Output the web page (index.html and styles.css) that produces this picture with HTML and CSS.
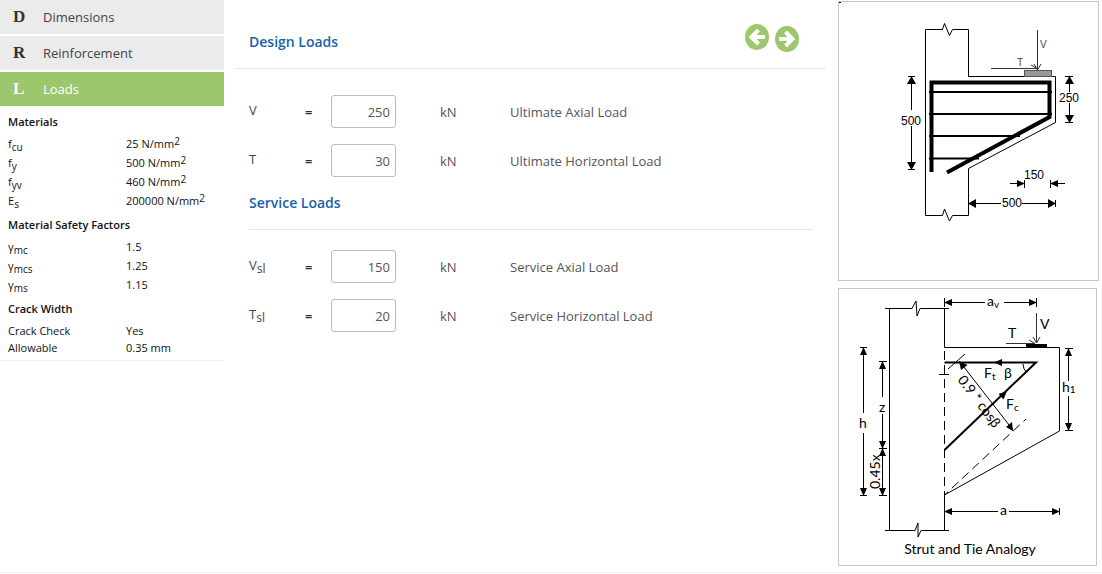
FILE: index.html
```html
<!DOCTYPE html>
<html lang="en">
<head>
    <meta charset="UTF-8">
    <meta name="viewport" content="width=device-width, initial-scale=1.0">
    <title>Corbel Design - Loads</title>
    <link rel="stylesheet" href="styles.css">
</head>
<body>
    <div class="page">
        <aside class="sidebar">
            <nav class="steps">
                <a href="#dimensions"><b>D</b><span>Dimensions</span></a>
                <a href="#reinforcement"><b>R</b><span>Reinforcement</span></a>
                <a href="#loads" class="active"><b>L</b><span>Loads</span></a>
            </nav>

            <h3>Materials</h3>
            <table class="summary">
                <tr><th>f<sub>cu</sub></th><td>25 N/mm<sup>2</sup></td></tr>
                <tr><th>f<sub>y</sub></th><td>500 N/mm<sup>2</sup></td></tr>
                <tr><th>f<sub>yv</sub></th><td>460 N/mm<sup>2</sup></td></tr>
                <tr><th>E<sub>s</sub></th><td>200000 N/mm<sup>2</sup></td></tr>
            </table>

            <h3>Material Safety Factors</h3>
            <table class="summary">
                <tr><th>γ<sub>mc</sub></th><td>1.5</td></tr>
                <tr><th>γ<sub>mcs</sub></th><td>1.25</td></tr>
                <tr><th>γ<sub>ms</sub></th><td>1.15</td></tr>
            </table>

            <h3>Crack Width</h3>
            <table class="summary compact">
                <tr><th>Crack Check</th><td>Yes</td></tr>
                <tr><th>Allowable</th><td>0.35 mm</td></tr>
            </table>
        </aside>

        <main class="content">
            <header class="title-bar">
                <h2>Design Loads</h2>
                <div class="pager">
                    <button type="button" class="prev" aria-label="Previous">
                        <svg viewBox="0 0 24 26"><ellipse cx="12" cy="13" rx="12" ry="13"/><path d="M20 13H7M13.500 6L6.500 13L13.500 20"/></svg>
                    </button>
                    <button type="button" class="next" aria-label="Next">
                        <svg viewBox="0 0 24 26"><ellipse cx="12" cy="13" rx="12" ry="13"/><path d="M4 13H17M10.500 6L17.500 13L10.500 20"/></svg>
                    </button>
                </div>
            </header>

            <form class="loads">
                <div class="row">
                    <label for="v">V</label><span class="equals">=</span>
                    <input type="text" id="v" value="250">
                    <span>kN</span><span>Ultimate Axial Load</span>
                </div>
                <div class="row">
                    <label for="t">T</label><span class="equals">=</span>
                    <input type="text" id="t" value="30">
                    <span>kN</span><span>Ultimate Horizontal Load</span>
                </div>

                <h2>Service Loads</h2>

                <div class="row">
                    <label for="vsl">V<sub>sl</sub></label><span class="equals">=</span>
                    <input type="text" id="vsl" value="150">
                    <span>kN</span><span>Service Axial Load</span>
                </div>
                <div class="row">
                    <label for="tsl">T<sub>sl</sub></label><span class="equals">=</span>
                    <input type="text" id="tsl" value="20">
                    <span>kN</span><span>Service Horizontal Load</span>
                </div>
            </form>
        </main>

        <div class="figures">
            <!-- Corbel elevation with reinforcement -->
            <svg class="figure elevation" viewBox="0 0 259 278">
                <rect width="2" height="1"/>
                <g class="line">
                    <path d="M86.500 213.500V27.500H103.500L105.500 21.500L110.500 33.500L113.500 27.500H129.500V74.500H216.500V120.500L129.500 166.500V213.500H113.500L110.500 219L105.500 207L103.500 213.500Z"/>
                    <path d="M72.500 76V108M72.500 124V165M69 74.500H76M69 167.500H76"/>
                    <path d="M230.500 76V90M230.500 101V118M226 74.500H234M226 120.500H234"/>
                    <path d="M171 181.500H183M185.500 178V186M211.500 178V186M214 181.500H226"/>
                    <path d="M132 201.500H162M183 201.500H214M129.500 198V205M216.500 198V205"/>
                </g>
                <g class="bar">
                    <path d="M92.500 170V80.500H210.500V115L108 170.500"/>
                    <path class="link" d="M90 90H213M90 112H213M90 134H181M90 156.500H140"/>
                </g>
                <g class="head">
                    <path d="M72.500 74L77 82H68ZM72.500 168L77 160H68Z"/>
                    <path d="M230.500 74L235 82H226ZM230.500 121L235 113H226Z"/>
                    <path d="M186 181.500L178 178V185ZM211 181.500L219 178V185Z"/>
                    <path d="M129 201.500L137 197V206ZM217 201.500L209 197V206Z"/>
                </g>
                <rect class="plate" x="185.500" y="68.500" width="27" height="6"/>
                <path class="load" d="M198.500 28V67M195 62L198.500 68L202 62M152 66.500H197M192 63L198 66.500"/>
                <text class="small" x="178" y="64">T</text>
                <text class="small" x="201" y="46">V</text>
                <text x="62" y="123">500</text>
                <text x="220" y="100">250</text>
                <text x="185" y="177">150</text>
                <text x="163" y="205">500</text>
            </svg>

            <!-- Strut and tie model -->
            <svg class="figure strut" viewBox="0 0 257 276">
                <g class="line">
                    <path d="M46 19.500H73L77 12L78 27L81 19.500H110M50.500 19.500V241.500M105.500 19.500V58.500H220.500V142L105.500 206V241.500"/>
                    <path d="M46 241.500H76L79 234L79 248L82 241.500H110"/>
                    <path d="M109 80L126 65M100 85.500H110M184 75Q184 80 188 84"/>
                    <path class="dashed" d="M105.500 62V206L187 130"/>
                    <path d="M105.500 9V18M197.500 9V18M108 13.500H146M165 13.500H195"/>
                    <path d="M24.500 60V124M24.500 144V204M21 58.500H28M21 206.500H28"/>
                    <path d="M43.500 75V108M43.500 125V204M40 72.500H48M40 159.500H48M40 206.500H48"/>
                    <path d="M229.500 61V92M229.500 107V139M226 59.500H234M226 141.500H234"/>
                    <path d="M220.500 219V226M108 222.500H159M170 222.500H218"/>
                    <path d="M121 73L174 141"/>
                </g>
                <path class="tie" d="M105.500 161L197 73.500H105.500"/>
                <path class="load" d="M197.500 24V53M194 48L197.500 54L201 48M167 54.500H196M190 51L196 54.500"/>
                <rect x="187" y="55" width="21" height="3"/>
                <g class="head">
                    <path d="M105 13.500L113 10V17ZM198 13.500L190 10V17Z"/>
                    <path d="M24.500 58L28 66H21ZM24.500 207L28 199H21Z"/>
                    <path d="M43.500 72L47 80H40ZM43.500 160L47 152H40ZM43.500 159L47 167H40ZM43.500 207L47 199H40Z"/>
                    <path d="M229.500 59L233 67H226ZM229.500 142L233 134H226Z"/>
                    <path d="M105 222.500L113 219V226ZM221 222.500L213 219V226Z"/>
                    <path d="M155 73.500L163 70V77ZM168 102L159.500 105L164.500 110.500Z"/>
                    <path d="M120 72L122 81L128.500 76ZM174 142L167 138L173 133Z"/>
                </g>
                <text x="148" y="17">a<tspan class="sub" dy="2">v</tspan></text>
                <text x="169" y="49">T</text>
                <text x="201" y="40">V</text>
                <text x="145" y="89">F<tspan class="sub" dy="2">t</tspan></text>
                <text x="165" y="89">β</text>
                <text x="167" y="120">F<tspan class="sub" dy="2">c</tspan></text>
                <text x="223" y="103">h<tspan class="sub" dy="1">1</tspan></text>
                <text x="20" y="139">h</text>
                <text x="40" y="123">z</text>
                <text x="161" y="226">a</text>
                <text transform="translate(41 200) rotate(-90)">0.45x</text>
                <text transform="translate(118 91) rotate(53)">0.9 * cosβ</text>
                <text class="caption" x="131" y="265">Strut and Tie Analogy</text>
            </svg>
        </div>
    </div>
</body>
</html>
```
FILE: styles.css
```css
* {
    box-sizing: border-box;
}

body {
    margin: 0;
    background-color: #fff;
    color: #444;
    font-family: "Open Sans", "Noto Sans", sans-serif;
    font-size: 13px;
}

.page {
    display: grid;
    grid-template-columns: 224px 1fr 264px;
    align-items: start;
    padding-bottom: 6px;
    border-bottom: 1px solid #eee;
}

/* Sidebar */
.sidebar {
    padding-bottom: 4px;
    border-bottom: 1px solid #eee;
    color: #111;
}

.steps {
    display: grid;
    gap: 2px;
    padding-bottom: 2px;
}

.steps a {
    display: flex;
    align-items: center;
    height: 34px;
    padding-left: 13px;
    background-color: #ebebeb;
    color: #444;
    text-decoration: none;
}

.steps b {
    width: 30px;
    color: #333;
    font-family: "Liberation Serif", serif;
    font-size: 17px;
}

.steps .active,
.steps .active b {
    background-color: #9cc76d;
    color: #fff;
}

.sidebar h3 {
    margin: 5px 8px 4px;
    color: #111;
    font-size: 11px;
    font-weight: 600;
    line-height: 18px;
}

.summary {
    width: 100%;
    border-collapse: collapse;
    font-size: 11px;
    line-height: 17px;
}

.summary tr {
    height: 19px;
}

.summary.compact tr {
    height: 17px;
}

.summary th,
.summary td {
    padding: 0;
    text-align: left;
    vertical-align: top;
    font-weight: 400;
}

.summary th {
    width: 126px;
    padding-left: 8px;
}

sub,
sup {
    font-size: 10px;
    line-height: 0;
}

sub {
    vertical-align: -3px;
}

sup {
    vertical-align: 3px;
}

/* Loads form */
.content h2 {
    margin: 0;
    color: #1763ab;
    font-size: 14px;
    font-weight: 600;
    line-height: 20px;
}

.title-bar {
    display: flex;
    justify-content: space-between;
    align-items: flex-start;
    height: 69px;
    margin: 0 12px 0 11px;
    padding: 24px 27px 0 14px;
    border-bottom: 1px solid #e4e4e4;
}

.title-bar h2 {
    padding-top: 8px;
}

.pager {
    display: flex;
    gap: 6px;
}

.pager button {
    width: 24px;
    height: 26px;
    padding: 0;
    border: none;
    background: none;
    cursor: pointer;
}

.pager .next {
    margin-top: 2px;
}

.pager svg {
    display: block;
    fill: #9cc76d;
}

.pager path {
    fill: none;
    stroke: #fff;
    stroke-width: 4;
}

.loads {
    padding: 26px 25px 0;
}

.loads .row {
    display: grid;
    grid-template-columns: 56px 26px 109px 70px 1fr;
    align-items: center;
    height: 33px;
    margin-bottom: 16px;
    color: #555;
}

.loads label {
    padding-bottom: 4px;
    color: #444;
}

.loads label sub {
    font-size: 12px;
}

.loads .equals {
    color: #333;
    font-weight: 600;
}

.loads input {
    width: 65px;
    height: 33px;
    padding: 0 5px;
    border: 1px solid #bbb;
    border-radius: 3px;
    color: #555;
    font: inherit;
    text-align: right;
}

.loads h2 {
    margin-bottom: 20px;
    padding-bottom: 16px;
    border-bottom: 1px solid #e4e4e4;
}

/* Figures */
.figures {
    display: grid;
    gap: 7px;
    padding: 1px 3px 0 0;
}

.figure {
    display: block;
    width: 100%;
    border: 1px solid #c8c8c8;
    font-family: "Liberation Sans", sans-serif;
    font-size: 12px;
}

.figure .line,
.figure .load,
.figure .bar,
.figure .tie {
    fill: none;
    stroke: #000;
}

.figure .load {
    stroke: #333;
}

.elevation .bar {
    stroke-width: 4;
}

.elevation .link {
    stroke-width: 2;
}

.elevation .plate {
    fill: #999;
    stroke: #555;
}

.elevation .small {
    font-size: 10px;
    fill: #444;
}

.strut {
    width: 259px;
    font-family: Lato, sans-serif;
    font-size: 14px;
}

.strut .tie {
    stroke-width: 2;
}

.strut .dashed {
    stroke-dasharray: 9 5;
}

.strut .sub {
    font-size: 10px;
}

.strut .caption {
    text-anchor: middle;
}
```
